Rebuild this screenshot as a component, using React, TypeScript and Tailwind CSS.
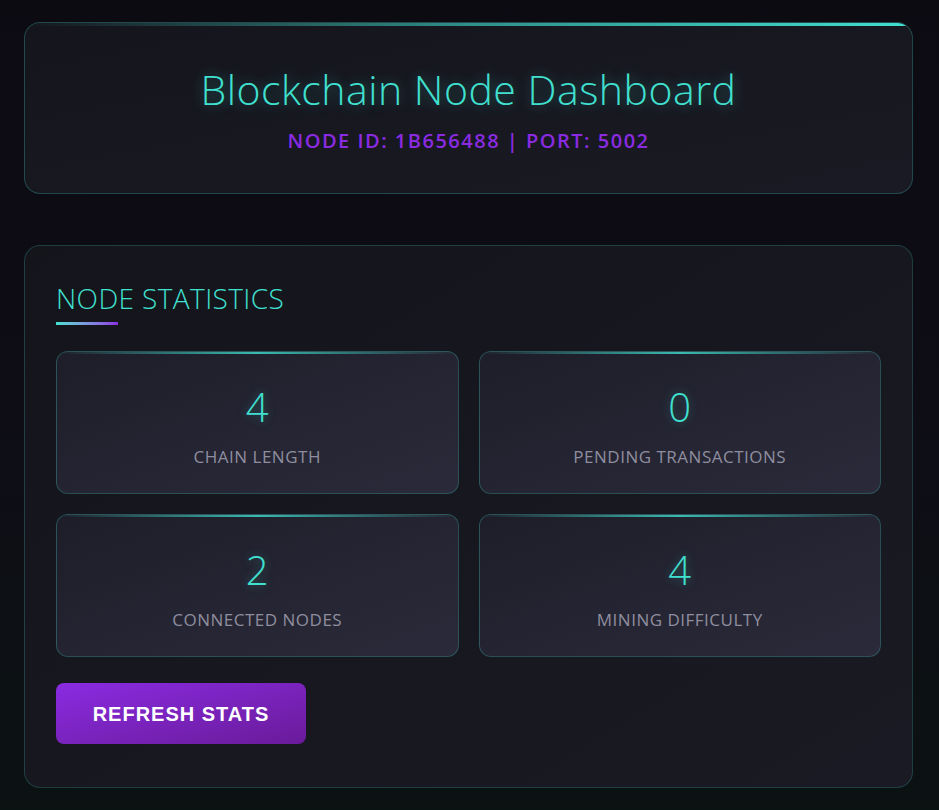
import React from 'react';

type Stat = {
  value: number;
  label: string;
};

const stats: Stat[] = [
  { value: 4, label: 'Chain Length' },
  { value: 0, label: 'Pending Transactions' },
  { value: 2, label: 'Connected Nodes' },
  { value: 4, label: 'Mining Difficulty' },
];

function StatCard(props: { stat: Stat }) {
  const { stat } = props;
  return (
    <div className="relative overflow-hidden h-[143px] rounded-xl border border-[#40e0d0]/25 bg-gradient-to-br from-[#1e1e2a] to-[#2a2a3a] flex flex-col items-center pt-[31px]">
      <div className="absolute top-0 left-0 right-0 h-[2px] bg-gradient-to-r from-transparent via-[#40e0d0] to-transparent opacity-80" />
      <div className="text-[40px] leading-[48px] font-light text-[#40e0d0] [text-shadow:0_0_10px_rgba(64,224,208,0.35)]">
        {stat.value}
      </div>
      <div className="mt-[16px] text-[17px] leading-5 uppercase text-[#8f8e9f] tracking-[0.5px]">
        {stat.label}
      </div>
    </div>
  );
}

export default function App() {
  return (
    <div className="min-h-[810px] bg-gradient-to-b from-[#0c0b12] via-[#0e0d16] to-[#0b1212] px-6 pt-[22px] pb-6 font-['Open_Sans',sans-serif]">
      <div className="w-[889px]">
        <header className="relative overflow-hidden h-[172px] rounded-2xl border border-[#40e0d0]/25 bg-gradient-to-br from-[#15151d] to-[#1a1a24] flex flex-col items-center pt-[40px]">
          <div className="absolute top-0 left-0 right-0 h-[3px] bg-gradient-to-r from-transparent via-[#40e0d0]/60 to-[#40e0d0]" />
          <h1 className="text-[41px] leading-[52px] font-light text-[#40e0d0] tracking-[0.5px] [text-shadow:0_0_14px_rgba(64,224,208,0.4)]">
            Blockchain Node Dashboard
          </h1>
          <p className="mt-[12px] text-[20px] leading-7 font-semibold text-[#8a2be2] tracking-[1.5px]">
            NODE ID: 1B656488 | PORT: 5002
          </p>
        </header>

        <section className="mt-[51px] rounded-2xl border border-[#40e0d0]/20 bg-gradient-to-br from-[#14141b] to-[#1a1a24] px-[31px] pt-[34px] pb-[43px]">
          <h2 className="text-[28px] leading-9 font-light uppercase text-[#40e0d0] tracking-[0.4px]">
            Node Statistics
          </h2>
          <div className="mt-[6px] h-[3px] w-[62px] bg-gradient-to-r from-[#40e0d0] to-[#8a2be2]" />

          <div className="mt-[26px] grid grid-cols-2 gap-5">
            {stats.map((stat) => (
              <StatCard key={stat.label} stat={stat} />
            ))}
          </div>

          <button className="mt-[26px] h-[61px] w-[250px] rounded-lg bg-gradient-to-br from-[#8a2be2] to-[#6a1b9a] text-white text-[20px] font-bold uppercase tracking-[1px] font-['Liberation_Sans',Arial,sans-serif]">
            Refresh Stats
          </button>
        </section>
      </div>
    </div>
  );
}
